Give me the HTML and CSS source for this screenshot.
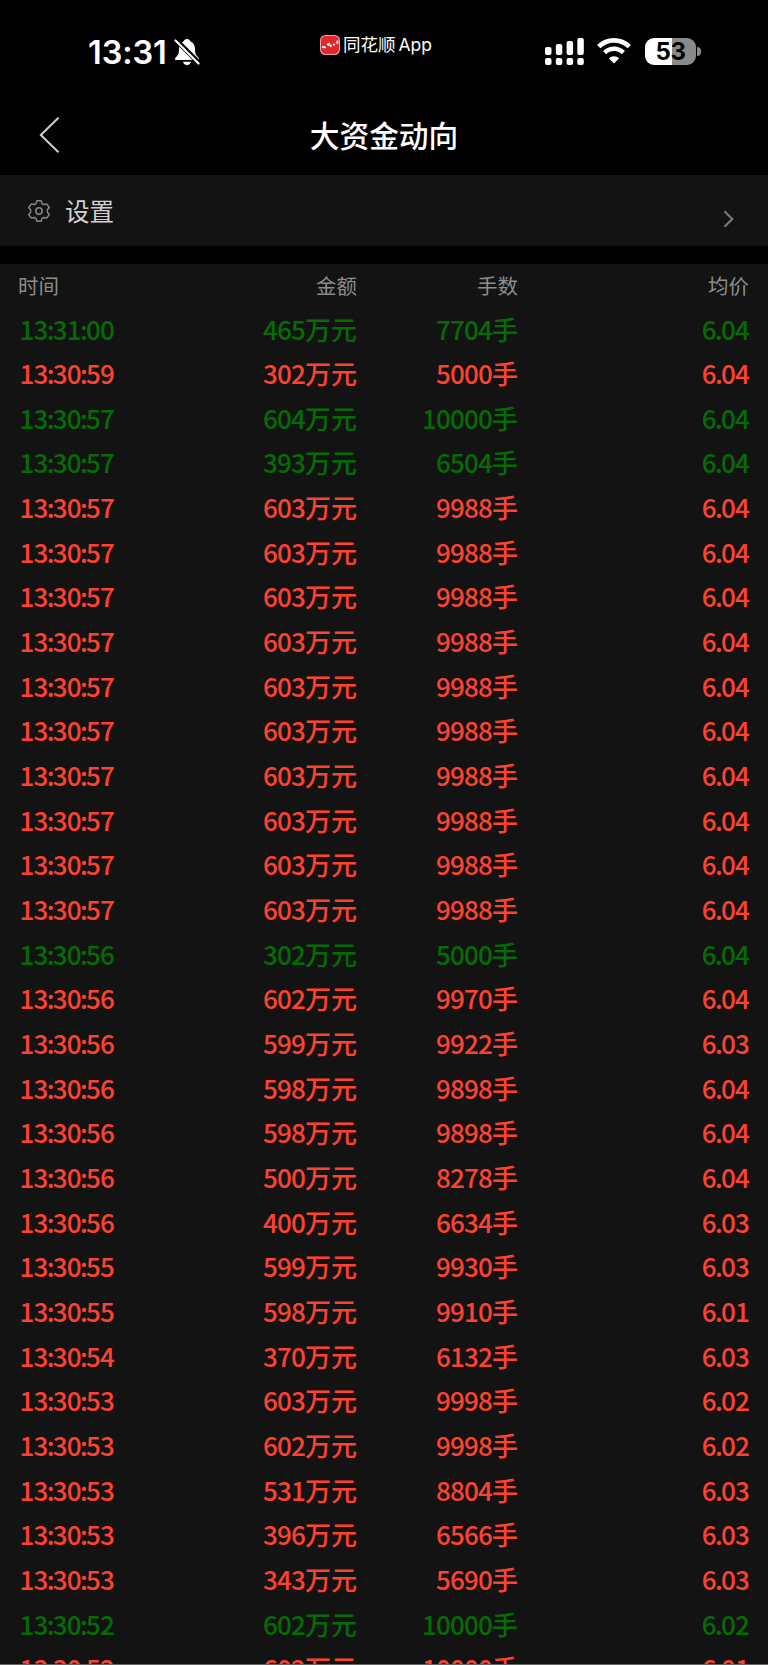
FILE: index.html
```html
<!DOCTYPE html>
<html lang="zh-CN">
<head>
    <meta charset="UTF-8">
    <meta name="viewport" content="width=device-width, initial-scale=1.0">
    <title>大资金动向</title>
    <link rel="stylesheet" href="styles.css">
</head>
<body>
<div class="status-bar">
    <div class="clock">
        <span class="clock-time">13:31</span>
        <svg class="bell" width="26" height="28" viewBox="0 0 26 28">
            <path d="M13 1c-2 0-3 1.200-3.300 2.300C6.500 4.500 5 7.500 5 11c0 5-1.200 6.500-3.300 8.500-1.300 1.300-1 2.500.5 2.500h21.600c1.500 0 1.800-1.200.5-2.500C22.200 17.500 21 16 21 11c0-3.500-1.500-6.500-4.700-7.700C16 2.200 15 1 13 1z" fill="#fff"/>
            <path d="M9 23.700h8c-.5 2-2 3.300-4 3.300s-3.500-1.300-4-3.300z" fill="#fff"/>
            <path d="M2 2L24.500 24.500" stroke="#000" stroke-width="5"/>
            <path d="M1.500 2.500L24.500 25.500" stroke="#fff" stroke-width="2.200" stroke-linecap="round"/>
        </svg>
    </div>
    <div class="source-app">
        <svg width="20" height="20" viewBox="0 0 20 20">
            <rect width="20" height="20" rx="5.500" fill="#f0a0a0"/>
            <rect x="1" y="1" width="18" height="18" rx="4.800" fill="#e3262b"/>
            <path d="M2 12.500l2-.8 1.500 1.300M7 9.500l2-.8-.5 2.300M10.500 9.500l.5 2.500M13 9.500l2 .2M16 7l1.500-.5v2.500" stroke="#fff" stroke-width="1.700" fill="none"/>
        </svg>
        <span>同花顺<span class="latin">App</span></span>
    </div>
    <div class="indicators">
        <svg width="40" height="28" viewBox="0 0 40 28" fill="#fff">
            <rect x="0" y="9" width="6.500" height="8" rx="2"/>
            <rect x="10.800" y="6" width="6.500" height="11" rx="2"/>
            <rect x="21.600" y="3" width="6.500" height="14" rx="2"/>
            <rect x="32.300" y="0" width="6.500" height="17" rx="2"/>
            <rect x="0" y="20" width="6.500" height="7" rx="2"/>
            <rect x="10.800" y="20" width="6.500" height="7" rx="2"/>
            <rect x="21.600" y="20" width="6.500" height="7" rx="2"/>
            <rect x="32.300" y="20" width="6.500" height="7" rx="2"/>
        </svg>
        <svg class="wifi" width="34" height="26" viewBox="0 0 34 26">
            <path d="M1.700 8.700a21.600 21.600 0 0 1 30.600 0" stroke="#fff" stroke-width="4.600" fill="none"/>
            <path d="M7.600 14.600a13.300 13.300 0 0 1 18.800 0" stroke="#fff" stroke-width="4.400" fill="none"/>
            <path d="M17 25.500l-5.200-5.200a7.400 7.400 0 0 1 10.400 0z" fill="#fff"/>
        </svg>
        <div class="battery"><span>53</span></div>
        <div class="battery-tip"></div>
    </div>
</div>

<header class="nav">
    <svg class="back" width="22" height="38" viewBox="0 0 22 38">
        <path d="M19.500 1.800L1.800 19l17.700 17.200" stroke="#d0d0d0" stroke-width="2" fill="none"/>
    </svg>
    <h1>大资金动向</h1>
</header>

<div class="settings">
    <svg class="gear" width="24" height="24" viewBox="0 0 24 24" fill="none" stroke="#858585" stroke-width="1.500" stroke-linejoin="round">
        <path d="M9.900 1.700h4.200l.9 2.800 1.700 1 2.900-.6 2.700 3.600-1.900 2.300v2.400l1.900 2.300-2.700 3.600-2.900-.6-1.700 1-.9 2.800H9.900L9 19.500l-1.700-1-2.900.6-2.700-3.600 1.900-2.300v-2.400L1.700 8.500l2.700-3.600 2.900.6 1.700-1z"/>
        <circle cx="12" cy="12" r="3.200"/>
    </svg>
    <span>设置</span>
    <svg class="more" width="12" height="18" viewBox="0 0 12 18">
        <path d="M1.500 1.200L9.300 9l-7.800 7.800" stroke="#777" stroke-width="2.200" fill="none"/>
    </svg>
</div>

<div class="panel">
    <div class="row head">
        <span>时间</span>
        <span>金额</span>
        <span>手数</span>
        <span>均价</span>
    </div>
    <div id="list"></div>
</div>

<script>
    // time, amount (万元), lots, average price, direction
    const trades = [
        ['13:31:00', 465, 7704, '6.04', 'sell'],
        ['13:30:59', 302, 5000, '6.04', 'buy'],
        ['13:30:57', 604, 10000, '6.04', 'sell'],
        ['13:30:57', 393, 6504, '6.04', 'sell'],
        ['13:30:57', 603, 9988, '6.04', 'buy'],
        ['13:30:57', 603, 9988, '6.04', 'buy'],
        ['13:30:57', 603, 9988, '6.04', 'buy'],
        ['13:30:57', 603, 9988, '6.04', 'buy'],
        ['13:30:57', 603, 9988, '6.04', 'buy'],
        ['13:30:57', 603, 9988, '6.04', 'buy'],
        ['13:30:57', 603, 9988, '6.04', 'buy'],
        ['13:30:57', 603, 9988, '6.04', 'buy'],
        ['13:30:57', 603, 9988, '6.04', 'buy'],
        ['13:30:57', 603, 9988, '6.04', 'buy'],
        ['13:30:56', 302, 5000, '6.04', 'sell'],
        ['13:30:56', 602, 9970, '6.04', 'buy'],
        ['13:30:56', 599, 9922, '6.03', 'buy'],
        ['13:30:56', 598, 9898, '6.04', 'buy'],
        ['13:30:56', 598, 9898, '6.04', 'buy'],
        ['13:30:56', 500, 8278, '6.04', 'buy'],
        ['13:30:56', 400, 6634, '6.03', 'buy'],
        ['13:30:55', 599, 9930, '6.03', 'buy'],
        ['13:30:55', 598, 9910, '6.01', 'buy'],
        ['13:30:54', 370, 6132, '6.03', 'buy'],
        ['13:30:53', 603, 9998, '6.02', 'buy'],
        ['13:30:53', 602, 9998, '6.02', 'buy'],
        ['13:30:53', 531, 8804, '6.03', 'buy'],
        ['13:30:53', 396, 6566, '6.03', 'buy'],
        ['13:30:53', 343, 5690, '6.03', 'buy'],
        ['13:30:52', 602, 10000, '6.02', 'sell'],
        ['13:30:52', 602, 10000, '6.01', 'buy']
    ];

    document.getElementById('list').innerHTML = trades.map(([time, amount, lots, price, side]) => `
        <div class="row ${side}">
            <span>${time.replaceAll(':', '<b>:</b>')}</span>
            <span>${amount}<i>万元</i></span>
            <span>${lots}<i>手</i></span>
            <span>${price.replace('.', '<b>.</b>')}</span>
        </div>`).join('');
</script>
</body>
</html>
```
FILE: styles.css
```css
* {
    box-sizing: border-box;
}
body {
    margin: 0;
    height: 1665px;
    overflow: hidden;
    display: flex;
    flex-direction: column;
    background-color: #000;
    color: #fff;
    font-family: "Noto Sans CJK SC", sans-serif;
}
svg {
    display: block;
    flex: none;
}
.status-bar {
    flex: none;
    height: 100px;
    display: grid;
    grid-template-columns: 320px 225px 1fr;
    align-items: start;
}
.clock {
    display: flex;
    padding: 34px 0 0 88px;
}
.clock-time {
    width: 86px;
    font-family: Inter, sans-serif;
    font-size: 32.500px;
    line-height: 38px;
    font-weight: 600;
    letter-spacing: -0.1px;
    white-space: nowrap;
}
.bell {
    margin-top: 4px;
}
.source-app {
    display: flex;
    align-items: center;
    gap: 3px;
    padding-top: 33px;
    font-size: 17.500px;
    line-height: 22px;
}
.latin {
    font-family: Inter, sans-serif;
    margin-left: 3px;
}
.indicators {
    display: flex;
    padding-top: 38px;
}
.wifi {
    margin-left: 12px;
}
.battery {
    width: 51px;
    height: 27px;
    margin-left: 14px;
    border-radius: 9px;
    background: linear-gradient(90deg, #fff 53%, #8a8a8a 53%);
    color: #000;
    font-family: Inter, sans-serif;
    font-size: 24px;
    line-height: 28px;
    font-weight: 700;
    letter-spacing: -0.5px;
    text-align: center;
}
.battery-tip {
    width: 4px;
    height: 9px;
    margin: 9px 0 0 1px;
    border-radius: 0 4px 4px 0;
    background-color: #8a8a8a;
}
.nav {
    flex: none;
    height: 74.500px;
    display: grid;
    grid-template-columns: 100px 1fr 100px;
}
.back {
    margin: 16px 0 0 39px;
}
h1 {
    margin: 0;
    font-size: 29.700px;
    line-height: 70px;
    font-weight: 500;
    text-align: center;
}
.settings {
    flex: none;
    height: 71.500px;
    display: flex;
    align-items: flex-start;
    padding: 0 33px 0 27px;
    background-color: #131313;
    color: #d2d2d2;
    font-size: 24.500px;
    line-height: 72px;
}
.gear {
    margin: 24px 14px 0 0;
}
.more {
    margin: 35px 0 0 auto;
}
.panel {
    flex: 1;
    min-height: 0;
    margin-top: 18px;
    overflow: hidden;
    background-color: #131313;
    border-bottom: 1px solid #666;
}
.row {
    height: 44.670px;
    display: grid;
    grid-template-columns: 180px 159px 161px 231px;
    padding: 0 19px 0 18px;
    font-size: 26px;
    line-height: 42px;
    font-weight: 500;
    letter-spacing: -0.8px;
    white-space: nowrap;
}
.row span + span {
    text-align: right;
}
.row b {
    margin: 0 -0.9px;
    font-weight: 500;
}
.row i {
    font-style: normal;
    letter-spacing: 0;
}
.buy span:first-child,
.sell span:first-child {
    padding-left: 1.500px;
}
.head {
    height: 43.500px;
    color: #8c8c8c;
    font-size: 20.500px;
    line-height: 43px;
    font-weight: 400;
    letter-spacing: 0;
}
.buy {
    color: #ff4230;
}
.sell {
    color: #056b05;
}
```
